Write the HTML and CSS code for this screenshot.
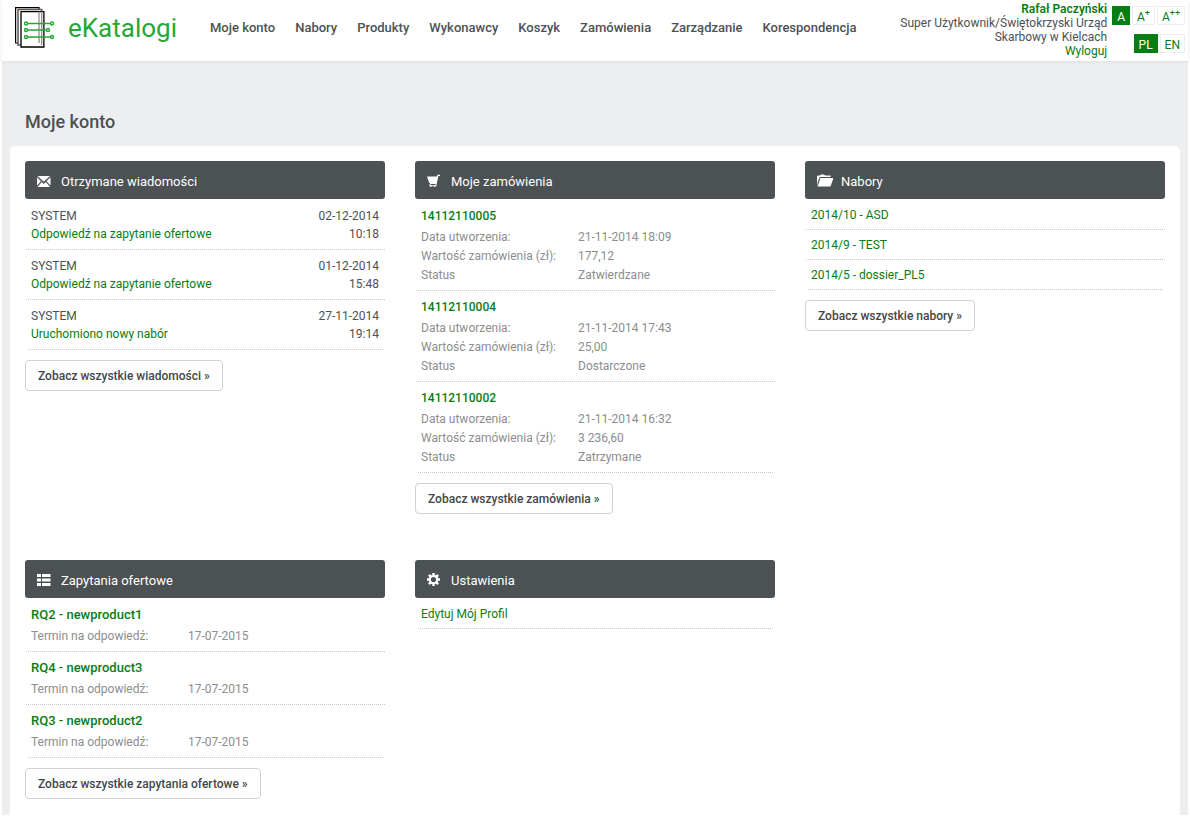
FILE: index.html
```html
<!DOCTYPE html>
<html lang="pl">
<head>
<meta charset="utf-8">
<title>eKatalogi - Moje konto</title>
<meta name="viewport" content="width=device-width, initial-scale=1">
<link rel="stylesheet" href="styles.css">
</head>
<body>
<div class="page">
  <header class="topbar">
    <a class="logo" href="#">
      <svg class="logo-mark" width="42" height="42" viewBox="0 0 42 42" fill="#fff" aria-hidden="true">
        <path d="M0.600 0.600h23.400v35.400H0.600z" stroke="#000" stroke-width="1.200"/>
        <path d="M3 2.600h23.700v35.400H3z" stroke="#5e5652" stroke-width="1.500"/>
        <path d="M6 4.600h22.900v35.400H6z" stroke="#000" stroke-width="1.300"/>
        <path d="M24 4.600V36M26.700 4.600V38" stroke="#8c8683" stroke-width="1.200"/>
        <g stroke="#26a737" stroke-width="1.400">
          <path d="M12 16.500h24M12 23h20M12 30h24"/>
          <circle cx="11" cy="16.500" r="1.500"/><circle cx="37" cy="16.500" r="1.500"/>
          <circle cx="11" cy="23" r="1.500"/><circle cx="33" cy="23" r="1.500"/>
          <circle cx="11" cy="30" r="1.500"/><circle cx="37" cy="30" r="1.500"/>
        </g>
      </svg>
      <span class="logo-name">eKatalogi</span>
    </a>
    <nav class="menu">
      <a href="#">Moje konto</a>
      <a href="#">Nabory</a>
      <a href="#">Produkty</a>
      <a href="#">Wykonawcy</a>
      <a href="#">Koszyk</a>
      <a href="#">Zamówienia</a>
      <a href="#">Zarządzanie</a>
      <a href="#">Korespondencja</a>
    </nav>
    <div class="user">
      <a class="user-name" href="#">Rafał Paczyński</a>
      <span>Super Użytkownik/Świętokrzyski Urząd Skarbowy w Kielcach</span>
      <a href="#">Wyloguj</a>
    </div>
    <div class="switches">
      <div class="switch">
        <button class="chip chip-on" type="button">A</button>
        <button class="chip" type="button">A<sup>+</sup></button>
        <button class="chip" type="button">A<sup>++</sup></button>
      </div>
      <div class="switch">
        <button class="chip chip-on" type="button">PL</button>
        <button class="chip" type="button">EN</button>
      </div>
    </div>
  </header>

  <h1 class="title">Moje konto</h1>

  <main class="panel">
    <section class="box">
      <h2 class="box-head">
        <svg class="icon" viewBox="0 0 16 16" fill="#fff" aria-hidden="true"><path d="M0.500 2h12.500L6.800 7.800zM0 3.200l4 4L0 11.500zM13.500 3.200v8.300l-4-4.300zM4.800 8l2 1.900 2-1.900 4.300 5H0.500z"/></svg>
        Otrzymane wiadomości
      </h2>
      <ul class="list">
        <li class="item message">
          <div class="message-text"><span>SYSTEM</span><a href="#">Odpowiedź na zapytanie ofertowe</a></div>
          <time class="message-date">02-12-2014 10:18</time>
        </li>
        <li class="item message">
          <div class="message-text"><span>SYSTEM</span><a href="#">Odpowiedź na zapytanie ofertowe</a></div>
          <time class="message-date">01-12-2014 15:48</time>
        </li>
        <li class="item message">
          <div class="message-text"><span>SYSTEM</span><a href="#">Uruchomiono nowy nabór</a></div>
          <time class="message-date">27-11-2014 19:14</time>
        </li>
      </ul>
      <button class="more" type="button">Zobacz wszystkie wiadomości »</button>
    </section>

    <section class="box">
      <h2 class="box-head">
        <svg class="icon" viewBox="0 0 16 16" fill="#fff" aria-hidden="true"><path d="M0 2.500h9.700L10.600 0.800H13v1.200h-1.600L9.700 10H3V9h-.800z"/><path d="M2.500 10h1v1.200h5V10h1v2.200H8.200v.800H7v-.800H4.500v.800H3.200v-.800h-.700z"/></svg>
        Moje zamówienia
      </h2>
      <ul class="list">
        <li class="item">
          <a class="item-title" href="#">14112110005</a>
          <dl class="facts">
            <dt>Data utworzenia:</dt><dd>21-11-2014 18:09</dd>
            <dt>Wartość zamówienia (zł):</dt><dd>177,12</dd>
            <dt>Status</dt><dd>Zatwierdzane</dd>
          </dl>
        </li>
        <li class="item">
          <a class="item-title" href="#">14112110004</a>
          <dl class="facts">
            <dt>Data utworzenia:</dt><dd>21-11-2014 17:43</dd>
            <dt>Wartość zamówienia (zł):</dt><dd>25,00</dd>
            <dt>Status</dt><dd>Dostarczone</dd>
          </dl>
        </li>
        <li class="item">
          <a class="item-title" href="#">14112110002</a>
          <dl class="facts">
            <dt>Data utworzenia:</dt><dd>21-11-2014 16:32</dd>
            <dt>Wartość zamówienia (zł):</dt><dd>3 236,60</dd>
            <dt>Status</dt><dd>Zatrzymane</dd>
          </dl>
        </li>
      </ul>
      <button class="more" type="button">Zobacz wszystkie zamówienia »</button>
    </section>

    <section class="box">
      <h2 class="box-head">
        <svg class="icon" viewBox="0 0 16 16" fill="#fff" aria-hidden="true"><path d="M0 12V2.500l1-1h2l1-1h3l1 1h5.500V3H2.800L1 7z"/><path d="M3.400 4H16.500L13.500 12.500H0.600z"/></svg>
        Nabory
      </h2>
      <ul class="list">
        <li class="item line"><a href="#">2014/10 - ASD</a></li>
        <li class="item line"><a href="#">2014/9 - TEST</a></li>
        <li class="item line"><a href="#">2014/5 - dossier_PL5</a></li>
      </ul>
      <button class="more" type="button">Zobacz wszystkie nabory »</button>
    </section>

    <section class="box">
      <h2 class="box-head">
        <svg class="icon" viewBox="0 0 16 16" fill="#fff" aria-hidden="true"><path d="M0 1h4v3H0zM5 1h8.500v3H5zM0 5.500h4v3H0zM5 5.500h8.500v3H5zM0 10h4v3H0zM5 10h8.500v3H5z"/></svg>
        Zapytania ofertowe
      </h2>
      <ul class="list requests">
        <li class="item">
          <a class="item-title" href="#">RQ2 - newproduct1</a>
          <dl class="facts"><dt>Termin na odpowiedź:</dt><dd>17-07-2015</dd></dl>
        </li>
        <li class="item">
          <a class="item-title" href="#">RQ4 - newproduct3</a>
          <dl class="facts"><dt>Termin na odpowiedź:</dt><dd>17-07-2015</dd></dl>
        </li>
        <li class="item">
          <a class="item-title" href="#">RQ3 - newproduct2</a>
          <dl class="facts"><dt>Termin na odpowiedź:</dt><dd>17-07-2015</dd></dl>
        </li>
      </ul>
      <button class="more" type="button">Zobacz wszystkie zapytania ofertowe »</button>
    </section>

    <section class="box">
      <h2 class="box-head">
        <svg class="icon" viewBox="0 0 16 16" aria-hidden="true"><circle cx="6.500" cy="6.500" r="3.700" fill="none" stroke="#fff" stroke-width="2.200"/><path d="M6.500 0v2.400M6.500 10.600V13M0 6.500h2.400M10.600 6.500H13M1.900 1.900l1.700 1.700M9.400 9.400l1.700 1.700M1.900 11.100l1.700-1.700M9.400 3.600l1.700-1.700" stroke="#fff" stroke-width="2.400"/></svg>
        Ustawienia
      </h2>
      <ul class="list">
        <li class="item line"><a href="#">Edytuj Mój Profil</a></li>
      </ul>
    </section>
  </main>
</div>
</body>
</html>
```
FILE: styles.css
```css
* {
  box-sizing: border-box;
}

body {
  margin: 0;
  background: #fff;
  color: #4d5154;
  font-family: Roboto, "Liberation Sans", sans-serif;
  font-size: 12px;
  line-height: 18px;
}

a {
  color: #087d14;
  text-decoration: none;
}

button {
  font: inherit;
  cursor: pointer;
}

.page {
  display: flex;
  flex-direction: column;
  min-height: calc(100vh - 2px);
  margin: 0 2px 2px;
  background: #eceef0;
}

.topbar {
  display: flex;
  align-items: flex-start;
  height: 61px;
  padding: 0 3px 0 13px;
  background: #fff;
  box-shadow: 0 1px 3px #dde0e2;
}

.logo {
  display: flex;
  flex: none;
  gap: 11px;
  width: 195px;
  padding-top: 7px;
  color: #26a737;
}

.logo-name {
  font-size: 26px;
  line-height: 42px;
}

.menu {
  display: flex;
  flex: none;
  gap: 20px;
  padding-top: 18px;
  font-size: 13px;
  font-weight: 500;
  line-height: 20px;
}

.menu a {
  color: #4d5154;
}

.user {
  display: flex;
  flex: 1;
  flex-direction: column;
  align-items: flex-end;
  padding: 2px 5px 0 24px;
  line-height: 14px;
  text-align: right;
}

.user-name {
  font-weight: 600;
}

.switches {
  display: flex;
  flex: none;
  flex-direction: column;
  gap: 9px;
  padding-top: 6px;
}

.switch {
  display: flex;
  justify-content: flex-end;
  gap: 2px;
}

.chip {
  height: 19px;
  padding: 2px 4px 0;
  border: 1px solid #eceeef;
  background: #fff;
  color: #087d14;
  line-height: 16px;
}

.chip sup {
  font-size: 9px;
  line-height: 0;
}

.chip-on {
  border-color: #087d14;
  background: #087d14;
  color: #fff;
}

.title {
  margin: 0;
  padding: 49px 23px 12px;
  font-size: 18px;
  font-weight: 500;
  line-height: 24px;
}

.panel {
  display: grid;
  flex: 1;
  grid-template-columns: repeat(3, minmax(0, 1fr));
  align-content: start;
  gap: 46px 30px;
  margin: 0 8px;
  padding: 15px 15px 16px;
  border-radius: 5px 5px 0 0;
  background: #fff;
}

.box-head {
  display: flex;
  align-items: center;
  gap: 8px;
  height: 38px;
  margin: 0 0 1px;
  padding: 3px 12px 0;
  border-radius: 3px;
  background: #4c5154;
  color: #fff;
  font-size: 13px;
  font-weight: 400;
}

.icon {
  flex: none;
  width: 16px;
  height: 16px;
}

.list {
  margin: 0 0 10px;
  padding: 0;
  list-style: none;
}

.item {
  margin-left: 1px;
  padding: 6px 5px 5px;
  border-bottom: 1px dotted #c4c6c8;
}

.item:last-child {
  margin: 0 2px 0 3px;
  padding-right: 3px;
  padding-left: 3px;
}

.message {
  display: flex;
  justify-content: space-between;
  padding: 7px 6px 6px 5px;
}

.message:last-child {
  padding-right: 4px;
}

.message-text {
  display: flex;
  flex-direction: column;
}

.message-date {
  width: 64px;
  text-align: right;
}

.item-title {
  display: block;
  margin-bottom: 2px;
  font-weight: 500;
  line-height: 20px;
}

.requests .item-title {
  font-size: 13px;
}

.facts {
  display: grid;
  grid-template-columns: 157px 1fr;
  margin: 0;
  color: #8b8d8f;
  line-height: 19px;
}

.facts dd {
  margin: 0;
}

.line {
  padding: 5px 5px 4px;
  line-height: 20px;
}

.more {
  height: 31px;
  padding: 1px 12px 0;
  border: 1px solid #cdd3d6;
  border-radius: 4px;
  background: #fff;
  color: #43474a;
  font-weight: 500;
}
```
